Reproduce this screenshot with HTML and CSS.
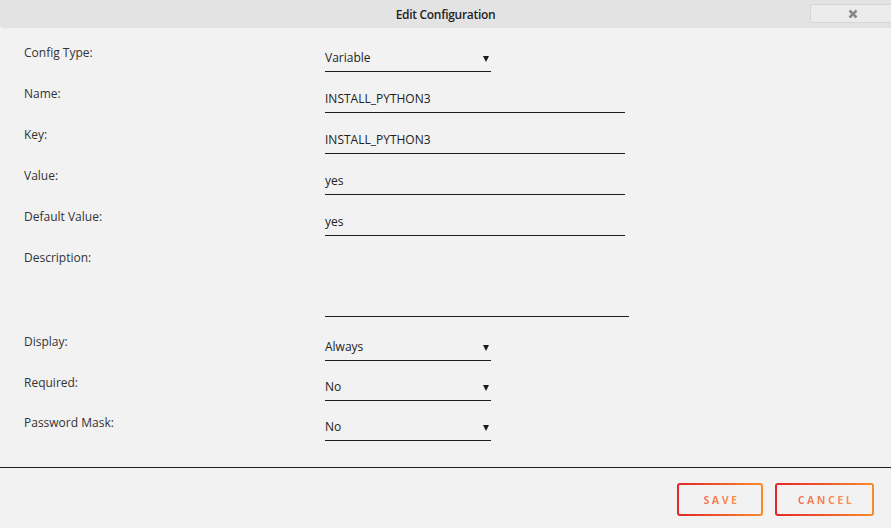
FILE: index.html
```html
<!DOCTYPE html>
<html>
<head>
<meta charset="utf-8">
<link rel="stylesheet" href="styles.css">
</head>
<body>
<div class="dialog">
  <div class="titlebar">
    <span class="title">Edit Configuration</span>
    <button class="close"><svg width="10" height="10" viewBox="0 0 10 10"><path d="M1.5 1.5 L8.5 8.5 M8.5 1.5 L1.5 8.5" stroke="#8a8a8a" stroke-width="2.6" stroke-linecap="butt"/></svg></button>
  </div>
  <form class="form">
    <div class="row"><label class="label">Config Type:</label><div class="field select">Variable<span class="arrow"></span></div></div>
    <div class="row"><label class="label">Name:</label><div class="field input">INSTALL_PYTHON3</div></div>
    <div class="row"><label class="label">Key:</label><div class="field input">INSTALL_PYTHON3</div></div>
    <div class="row"><label class="label">Value:</label><div class="field input">yes</div></div>
    <div class="row"><label class="label">Default Value:</label><div class="field input">yes</div></div>
    <div class="row row-tall"><label class="label">Description:</label><div class="field textarea"></div></div>
    <div class="row row-gap"><label class="label">Display:</label><div class="field select">Always<span class="arrow"></span></div></div>
    <div class="row row-short"><label class="label">Required:</label><div class="field select">No<span class="arrow"></span></div></div>
    <div class="row row-short"><label class="label">Password Mask:</label><div class="field select">No<span class="arrow"></span></div></div>
  </form>
  <div class="footer">
    <button class="btn"><span>SAVE</span></button>
    <button class="btn btn-cancel"><span>CANCEL</span></button>
  </div>
</div>
</body>
</html>
```
FILE: styles.css
```css
html, body {
  margin: 0;
  padding: 0;
  background: #f2f2f2;
  font-family: "Open Sans", "Liberation Sans", sans-serif;
  font-size: 12px;
  color: #2a2a2a;
}
.dialog {
  width: 891px;
  height: 528px;
  overflow: hidden;
}
.titlebar {
  height: 28px;
  background: #e3e3e3;
  border-bottom-left-radius: 4px;
  display: flex;
  align-items: center;
  justify-content: center;
  position: relative;
}
.title {
  font-weight: 600;
  font-size: 12px;
  color: #1f1f1f;
  letter-spacing: -0.3px;
}
.close {
  position: absolute;
  left: 810px;
  top: 4px;
  width: 90px;
  height: 19px;
  background: #ececec;
  border: 1px solid #d6d6d6;
  border-radius: 3px;
  display: flex;
  align-items: center;
  justify-content: flex-start;
  padding: 0 0 0 37px;
  box-sizing: border-box;
}
.form {
  padding-top: 3px;
  margin: 0;
}
.row {
  display: flex;
  height: 41px;
}
.row-tall {
  height: 81px;
}
.row-gap {
  margin-top: 3px;
}
.row-short {
  height: 40px;
}
.label {
  width: 325px;
  padding-left: 24px;
  box-sizing: border-box;
  margin-top: 13.5px;
  line-height: 16px;
  height: 16px;
  color: #333;
}
.field {
  align-self: flex-end;
  box-sizing: border-box;
  height: 26px;
  padding-top: 4px;
  line-height: 16px;
  border-bottom: 1px solid #1e1e1e;
  color: #222;
  position: relative;
}
.input { width: 300px; }
.select { width: 166px; }
.textarea { width: 304px; height: 26px; }
.arrow {
  position: absolute;
  right: 2px;
  top: 10px;
  width: 0;
  height: 0;
  border-left: 3px solid transparent;
  border-right: 3px solid transparent;
  border-top: 6px solid #1a1a1a;
}
.footer {
  margin-top: 26px;
  border-top: 1px solid #1e1e1e;
  display: flex;
  justify-content: flex-end;
  gap: 12px;
  padding: 15px 17px 0 0;
}
.btn {
  width: 86px;
  height: 33px;
  border: 2px solid transparent;
  border-radius: 3px;
  background: linear-gradient(#f2f2f2, #f2f2f2) padding-box,
              linear-gradient(90deg, #e3262a, #f98b2a) border-box;
  font-family: "Open Sans", "Liberation Sans", sans-serif;
  font-weight: 700;
  font-size: 10.5px;
  letter-spacing: 2.6px;
  padding: 0 0 0 3px;
  cursor: pointer;
}
.btn span {
  background: linear-gradient(90deg, #f36f55, #fa9445);
  -webkit-background-clip: text;
  background-clip: text;
  color: transparent;
}
.btn-cancel {
  width: 99px;
}
```
